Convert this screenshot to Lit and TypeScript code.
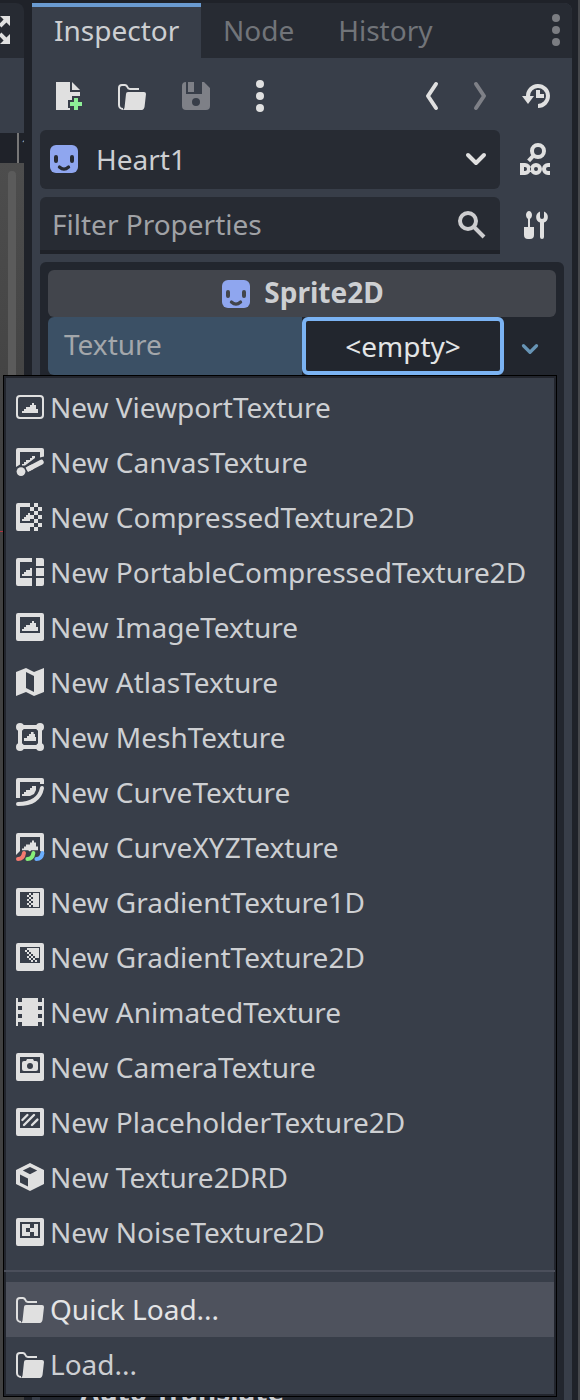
import { LitElement, html, css, svg } from "lit";
import { customElement, property } from "lit/decorators.js";

const MOUNTAIN = "M9 5v1H8v1H6v1H5v1H4v1h8V8h-1V6h-1V5z";
const FRAME = "M2 1a1 1 0 0 0-1 1v12a1 1 0 0 0 1 1h12a1 1 0 0 0 1-1V2a1 1 0 0 0-1-1zm1 2h10v8H3z";

const checker = (cells: number[][], s = 1) =>
  svg`<path d=${cells.map(([x, y]) => `M${x} ${y}h${s}v${s}h${-s}z`).join("")} />`;

const glyphs: Record<string, unknown> = {
  fileNew: svg`<path d="M2 1h7v5h5v2h-4v2H8v4h1v1H2zM10 1l4 4h-4z"/><path fill="#8eef97" d="M11 9h2v2h2v2h-2v2h-2v-2H9v-2h2z"/>`,
  folder: svg`<path class="thin" d="M11.500 4.500H7A1.500 1.500 0 0 1 5.700 3.500 1.500 1.500 0 0 0 4.500 2.500H3A1.500 1.500 0 0 0 1.500 4v8.500a2 2 0 0 0 2 2"/><path d="M6 6h8a1 1 0 0 1 1 1l-.7 6.200A2 2 0 0 1 12.300 15H3c1 0 1.200-.8 1.300-1.500L5 7a1 1 0 0 1 1-1z"/>`,
  save: svg`<path fill-rule="evenodd" d="M3 1a2 2 0 0 0-2 2v10a2 2 0 0 0 2 2h10a2 2 0 0 0 2-2V4l-3-3h-1v6H3V1zm1 0v5h3V1zm4 8a2 2 0 0 1 0 4 2 2 0 0 1 0-4z"/>`,
  dots: svg`<circle cx="8" cy="2" r="2"/><circle cx="8" cy="8" r="2"/><circle cx="8" cy="14" r="2"/>`,
  back: svg`<path class="line" d="M10 2 6 8l4 6"/>`,
  forward: svg`<path class="line" d="m6 2 4 6-4 6"/>`,
  history: svg`<path class="line flat" d="M4 8.200a5 5 0 1 1 5 4.800"/><path d="M1 8h6l-3 4zM8 5h2v2h2v2H8z"/>`,
  sprite: svg`<path fill="#8fa6ef" d="M4 1h8a3 3 0 0 1 3 3v8a3 3 0 0 1-3 3H4a3 3 0 0 1-3-3V4a3 3 0 0 1 3-3z"/><path class="cut" d="M3 7a1 1 0 0 1 2 0v2a1 1 0 0 1-2 0zM11 7a1 1 0 0 1 2 0v2a1 1 0 0 1-2 0z"/><path class="smile" d="M5.700 12q2.300 2.100 4.600 0"/>`,
  down: svg`<path class="line" d="m4 6 4 4 4-4"/>`,
  fold: svg`<path class="line" d="m5 3 5 5-5 5"/>`,
  search: svg`<circle class="line" cx="6" cy="6" r="4"/><path class="line flat" d="m9 9 5 5"/>`,
  doc: svg`<circle class="line" cx="9" cy="4" r="3"/><path class="line flat" d="M7 6 4.300 8.900"/><path fill-rule="evenodd" d="M0 10h2.500a3 3 0 0 1 0 6H0zm2 2v2h.5a1 1 0 0 0 0-2zM8 10a3 3 0 0 1 0 6 3 3 0 0 1 0-6zm0 2a1 1 0 0 0 0 2 1 1 0 0 0 0-2zM15 10v2h-1a1 1 0 0 0 0 2h1v2h-1a3 3 0 0 1 0-6z"/>`,
  tools: svg`<path d="M4.500 1C3.700 1 3 2 3 3s.5 1.500 1 2v4H2v4a2 2 0 0 0 2 2h1a2 2 0 0 0 2-2V9H5V5c.5-.5 1-1 1-2s-.7-2-1.500-2zM10 1.200A3 3 0 0 0 10 6.800V14a1 1 0 0 0 2 0V6.800a3 3 0 0 0 0-5.600V4a1 1 0 0 1-2 0z"/>`,
  expand: svg`<path d="m10 1 1.800 1.800-2.500 2.500 1.400 1.400 2.500-2.500L15 6V1zM10 15l1.800-1.800-2.500-2.500 1.400-1.400 2.500 2.500L15 10v5zM6 1 4.200 2.800l2.500 2.500-1.400 1.400-2.500-2.500L1 6V1zM6 15l-1.800-1.800 2.500-2.500-1.400-1.400-2.500 2.500L1 10v5z"/>`,
  viewport: svg`<rect class="thin" x="1.500" y="2.500" width="13" height="11" rx="1.500"/><path transform="translate(0 1)" d=${MOUNTAIN}/>`,
  canvas: svg`<path d="M2 1a1 1 0 0 0-1 1v8.500l2-1.300V3h10v2.800l2-.6V2a1 1 0 0 0-1-1zM9 5v1H8v1H6v1H5v1H4v.8h1.500L10.500 6V5z"/><circle cx="3.500" cy="12.800" r="2.200"/><path class="line wide" d="m7.500 11.300 6.100-3.200"/><path class="line wide flat" d="m6.400 11.900 3-1.600"/>`,
  compressed: svg`<path d="M2 1a1 1 0 0 0-1 1v12a1 1 0 0 0 1 1h6v-4H3V3h5V1zM8 6H7v1H6v1H5v1H4v1h4z"/>${checker([[10,1],[8,3],[12,3],[10,5],[8,7],[12,7],[10,9],[8,11],[12,11],[10,13]], 2)}`,
  portable: svg`<path d="M2 1a1 1 0 0 0-1 1v12a1 1 0 0 0 1 1h7v-4H3V3h6V1zM9 6H8v1H6v1H5v1H4v1h5zM11 1h3a1 1 0 0 1 1 1v3h-4zM11 6h4v4h-4zM11 11h4v3a1 1 0 0 1-1 1h-3z"/>`,
  image: svg`<path fill-rule="evenodd" d=${FRAME}/><path d=${MOUNTAIN}/>`,
  atlas: svg`<path fill-rule="evenodd" d="M6 1 1 3v12l5-2 4 2 5-2V1l-5 2zm0 2 4 2v8l-4-2z"/>`,
  mesh: svg`<path d="M2 3h2v10H2zM12 3h2v10h-2zM3 2h10v2H3zM3 12h10v2H3z"/><circle cx="3" cy="3" r="2"/><circle cx="13" cy="3" r="2"/><circle cx="3" cy="13" r="2"/><circle cx="13" cy="13" r="2"/><path d="M8.500 5.500v1h-1v1h-1v1H5V10h6V8h-.5V6.500h-.7v-1z"/>`,
  curve: svg`<path d="M2 1a1 1 0 0 0-1 1v9h2V3h10v1h2V2a1 1 0 0 0-1-1zM10 5H9v1H8v1H6v1H5v1H4v1h4l2-1 1-2V5z"/><path class="line" d="M2 14c7 0 11-3 12-8"/>`,
  curveXYZ: svg`<path d="M2 1a1 1 0 0 0-1 1v10l2-2V3h10v7l2 1V2a1 1 0 0 0-1-1zM9 4.800v1H8v1H6v1H5v1H4v.8h3l1 .6.6-.6h3.400V7.800h-1v-2h-1v-1z"/><g class="line"><path stroke="#f47a70" d="M2 14q2.600 0 3-3"/><path stroke="#86ef7a" d="M6.700 14q2.600 0 3-3"/><path stroke="#6aaeff" d="M11.200 14q2.600 0 3-3"/></g>`,
  gradient1: svg`<path fill-rule="evenodd" d=${FRAME}/><path d="M9.500 3.500h3v7h-3z"/>${checker([[6.5,4.5],[7.5,3.5],[7.5,5.5],[6.5,6.5],[7.5,7.5],[6.5,8.5],[7.5,9.5],[8.5,4.5],[8.5,6.5],[8.5,8.5]])}`,
  gradient2: svg`<path fill-rule="evenodd" d=${FRAME}/><path d="M7.500 3.500h5v5h-2v-1h-1v-1h-1v-1h-1z"/>${checker([[6.5,3.5],[5.5,4.5],[6.5,5.5],[7.5,6.5],[6.5,7.5],[8.5,7.5],[7.5,8.5],[9.5,8.5],[8.5,9.5],[10.5,9.5]])}`,
  animated: svg`<path d="M1 1h1v2h2V1h8v2h2V1h1v14h-1v-2h-2v2H4v-2H2v2H1zm1 4v2h2V5zm10 0v2h2V5zM2 9v2h2V9zm10 0v2h2V9z" fill-rule="evenodd"/>`,
  camera: svg`<path fill-rule="evenodd" d=${FRAME}/><path fill-rule="evenodd" d="M6.500 4 6 5H5a1 1 0 0 0-1 1v3a1 1 0 0 0 1 1h6a1 1 0 0 0 1-1V6a1 1 0 0 0-1-1h-1l-.5-1zM8 6a1.500 1.500 0 0 1 0 3 1.500 1.500 0 0 1 0-3z"/>`,
  placeholder: svg`<path fill-rule="evenodd" d=${FRAME}/><path class="thin round" d="m4.200 7 2.500-2.500M5 9.500l5-5M9 9.500l2.700-2.700"/>`,
  cube: svg`<path fill-rule="evenodd" d="M8 1 1 4.500v7L8 15l7-3.500v-7zm0 2 3.600 1.800L8 6.600 4.400 4.800zM3 6.700l4 2v4l-4-2z"/>`,
  noise: svg`<path fill-rule="evenodd" d=${FRAME}/>${checker([[4,4],[4,6],[4,8],[6,4],[8,6],[6,8],[10,4],[10,6],[10,8]], 2)}`,
};

@customElement("ed-icon")
class EdIcon extends LitElement {
  @property() name = "";
  static styles = css`
    :host { display: block; width: 32px; height: 32px; flex: none; color: #e0e0e0; }
    svg { display: block; width: 100%; height: 100%; fill: currentColor; overflow: visible; }
    .line { fill: none; stroke-width: 2; stroke-linecap: round; stroke-linejoin: round; }
    .line:not(g) { stroke: currentColor; }
    .line.wide { stroke-width: 2.5; }
    .flat { stroke-linecap: butt; }
    .thin { fill: none; stroke: currentColor; stroke-width: 1; }
    .thin.round { stroke-width: 1.2; stroke-linecap: round; }
    .cut { fill: var(--cut, #272b33); }
    .smile { fill: none; stroke: var(--cut, #272b33); stroke-width: 1.6; stroke-linecap: round; }
  `;
  render() {
    return html`<svg viewBox="0 0 16 16">${glyphs[this.name]}</svg>`;
  }
}

const ITEMS: [string, string][] = [
  ["viewport", "New ViewportTexture"],
  ["canvas", "New CanvasTexture"],
  ["compressed", "New CompressedTexture2D"],
  ["portable", "New PortableCompressedTexture2D"],
  ["image", "New ImageTexture"],
  ["atlas", "New AtlasTexture"],
  ["mesh", "New MeshTexture"],
  ["curve", "New CurveTexture"],
  ["curveXYZ", "New CurveXYZTexture"],
  ["gradient1", "New GradientTexture1D"],
  ["gradient2", "New GradientTexture2D"],
  ["animated", "New AnimatedTexture"],
  ["camera", "New CameraTexture"],
  ["placeholder", "New PlaceholderTexture2D"],
  ["cube", "New Texture2DRD"],
  ["noise", "New NoiseTexture2D"],
];

@customElement("texture-menu")
class TextureMenu extends LitElement {
  static styles = css`
    :host { display: block; box-sizing: border-box; border: 1px solid #000; background: #22252d; padding: 2px; }
    .list { background: #383e49; padding: 2px 0; }
    .item { box-sizing: border-box; display: flex; align-items: flex-start; height: 55px; padding: 8px 0 0 8px; gap: 4px; color: #cdcfd2; white-space: pre; }
    .item ed-icon { margin-top: 3px; }
    .item.hover { background: #4e525d; color: #e3e4e6; }
    .sep { height: 2px; background: #4b4f5b; margin: 10px -1px 10px -2px; }
  `;
  item(icon: string, label: string, hover = false) {
    return html`<div class="item ${hover ? "hover" : ""}"><ed-icon name=${icon}></ed-icon><span>${label}</span></div>`;
  }
  render() {
    return html`<div class="list">
      ${ITEMS.map(([i, l]) => this.item(i, l))}
      <div class="sep"></div>
      ${this.item("folder", "Quick Load...", true)}
      ${this.item("folder", "Load...")}
    </div>`;
  }
}

@customElement("app-root")
class AppRoot extends LitElement {
  static styles = css`
    :host {
      display: flex; position: relative; width: 580px; height: 1400px; overflow: hidden;
      background: #1f2229; color: #cdcfd2; font: 28px/38px "Noto Sans", sans-serif;
    }
    * { box-sizing: border-box; }
    .viewport { width: 24px; display: flex; flex-direction: column; padding-top: 3px; overflow: hidden; }
    .vtab { height: 55px; background: #272b33; border-top-right-radius: 8px; display: flex; justify-content: flex-end; padding: 11px 12px 0 0; }
    .vbar { height: 75px; background: #383e49; }
    .ruler { height: 30px; display: flex; justify-content: flex-end; font-size: 16px; line-height: 24px; color: #999; }
    .tick { width: 7px; border-left: 2px solid #777; padding-left: 2px; overflow: hidden; }
    .scene { flex: 1; background: linear-gradient(#4d4d4d, #414141 300px); padding: 8px 8px 0; display: flex; flex-direction: column; }
    .scroll { height: 360px; border-radius: 4px; background: #5b5b5b; }
    .axis { height: 1px; margin: 0 -8px; background: #b0323f; }
    .dock { width: 540px; margin: 3px 0 0 8px; background: #383e49; display: flex; flex-direction: column; border-top-right-radius: 8px; overflow: hidden; }
    .edge { width: 2px; margin-left: 6px; background: #46484c; }
    .tabs { height: 55px; display: flex; background: #272b33; color: #717479; }
    .tab { padding: 8px 22px 0; }
    .tab.on { width: 169px; background: #383e49; border-top: 4px solid #6a9bd1; padding-top: 4px; color: #cdcfd2; }
    .tabs ed-icon { margin: 11px 0 0 auto; color: #7b7d82; }
    .tools { display: flex; height: 72px; padding: 22px 20px 0; }
    .tools ed-icon { margin-left: 32px; }
    .tools ed-icon:first-child { margin-left: 0; }
    .tools .gap { margin-left: auto; }
    .tools .near { margin-left: 16px; }
    .tools .last { margin-left: 24px; }
    .off { color: #7e8087; }
    .row { display: flex; align-items: flex-start; padding-left: 8px; }
    .row + .row { margin-top: 8px; }
    .row > ed-icon { margin: 13px 0 0 20px; }
    .row + .row > ed-icon { margin-top: 12px; }
    .field { width: 460px; display: flex; align-items: flex-start; background: #272b33; border-radius: 6px; }
    .node { height: 59px; gap: 16px; padding: 13px 8px 0; }
    .node span { margin-top: -3px; }
    .filter { height: 57px; border-bottom: 4px solid #1f2229; border-radius: 6px 6px 0 0; padding: 8px 12px 0; color: #a0a2a6; }
    .filter ed-icon { margin-top: 4px; color: #cdcdcf; }
    .push { margin-left: auto; }
    .body { flex: 1; margin: 8px 8px 0; background: #22262e; border-radius: 6px 6px 0 0; padding: 8px 8px 0; display: flex; flex-direction: column; overflow: hidden; }
    .class { height: 47px; background: #42454c; border-radius: 6px; display: flex; align-items: flex-start; justify-content: center; padding-top: 4px; gap: 12px; font-weight: 700; --cut: #42454c; }
    .class ed-icon { margin-top: 4px; }
    .class span { margin-top: -1px; }
    .prop { display: flex; height: 58px; }
    .label { width: 254px; background: #3b5065; border-radius: 6px 0 0 6px; padding: 8px 16px; color: #a3a7ab; }
    .empty { width: 202px; border: 4px solid #7bb3f3; border-radius: 6px; color: #e3e5e6; text-align: center; line-height: 50px; }
    .arrow { width: 26px; height: 26px; color: #6794b5; margin: 19px 0 0 13px; }
    .more { display: flex; margin-top: auto; height: 28px; padding-left: 4px; gap: 4px; font-weight: 700; }
    .more ed-icon { width: 24px; height: 24px; color: #6f7277; }
    texture-menu { position: absolute; left: 3px; top: 375px; width: 554px; height: 1022px; }
  `;
  render() {
    return html`
      <div class="viewport">
        <div class="vtab"><ed-icon name="expand"></ed-icon></div>
        <div class="vbar"></div>
        <div class="ruler"><div class="tick">1</div></div>
        <div class="scene"><div class="scroll"></div><div class="axis"></div></div>
      </div>
      <div class="dock">
        <div class="tabs">
          <div class="tab on">Inspector</div>
          <div class="tab">Node</div>
          <div class="tab">History</div>
          <ed-icon name="dots"></ed-icon>
        </div>
        <div class="tools">
          <ed-icon name="fileNew"></ed-icon>
          <ed-icon name="folder"></ed-icon>
          <ed-icon class="off" name="save"></ed-icon>
          <ed-icon name="dots"></ed-icon>
          <ed-icon class="gap" name="back"></ed-icon>
          <ed-icon class="near off" name="forward"></ed-icon>
          <ed-icon class="last" name="history"></ed-icon>
        </div>
        <div class="row">
          <div class="field node"><ed-icon name="sprite"></ed-icon><span>Heart1</span><ed-icon class="push" name="down"></ed-icon></div>
          <ed-icon name="doc"></ed-icon>
        </div>
        <div class="row">
          <div class="field filter"><span>Filter Properties</span><ed-icon class="push" name="search"></ed-icon></div>
          <ed-icon name="tools"></ed-icon>
        </div>
        <div class="body">
          <div class="class"><ed-icon name="sprite"></ed-icon><span>Sprite2D</span></div>
          <div class="prop">
            <div class="label">Texture</div>
            <div class="empty">&lt;empty&gt;</div>
            <ed-icon class="arrow" name="down"></ed-icon>
          </div>
          <div class="more"><ed-icon name="fold"></ed-icon><span>Auto Translate</span></div>
        </div>
      </div>
      <div class="edge"></div>
      <texture-menu></texture-menu>
    `;
  }
}
